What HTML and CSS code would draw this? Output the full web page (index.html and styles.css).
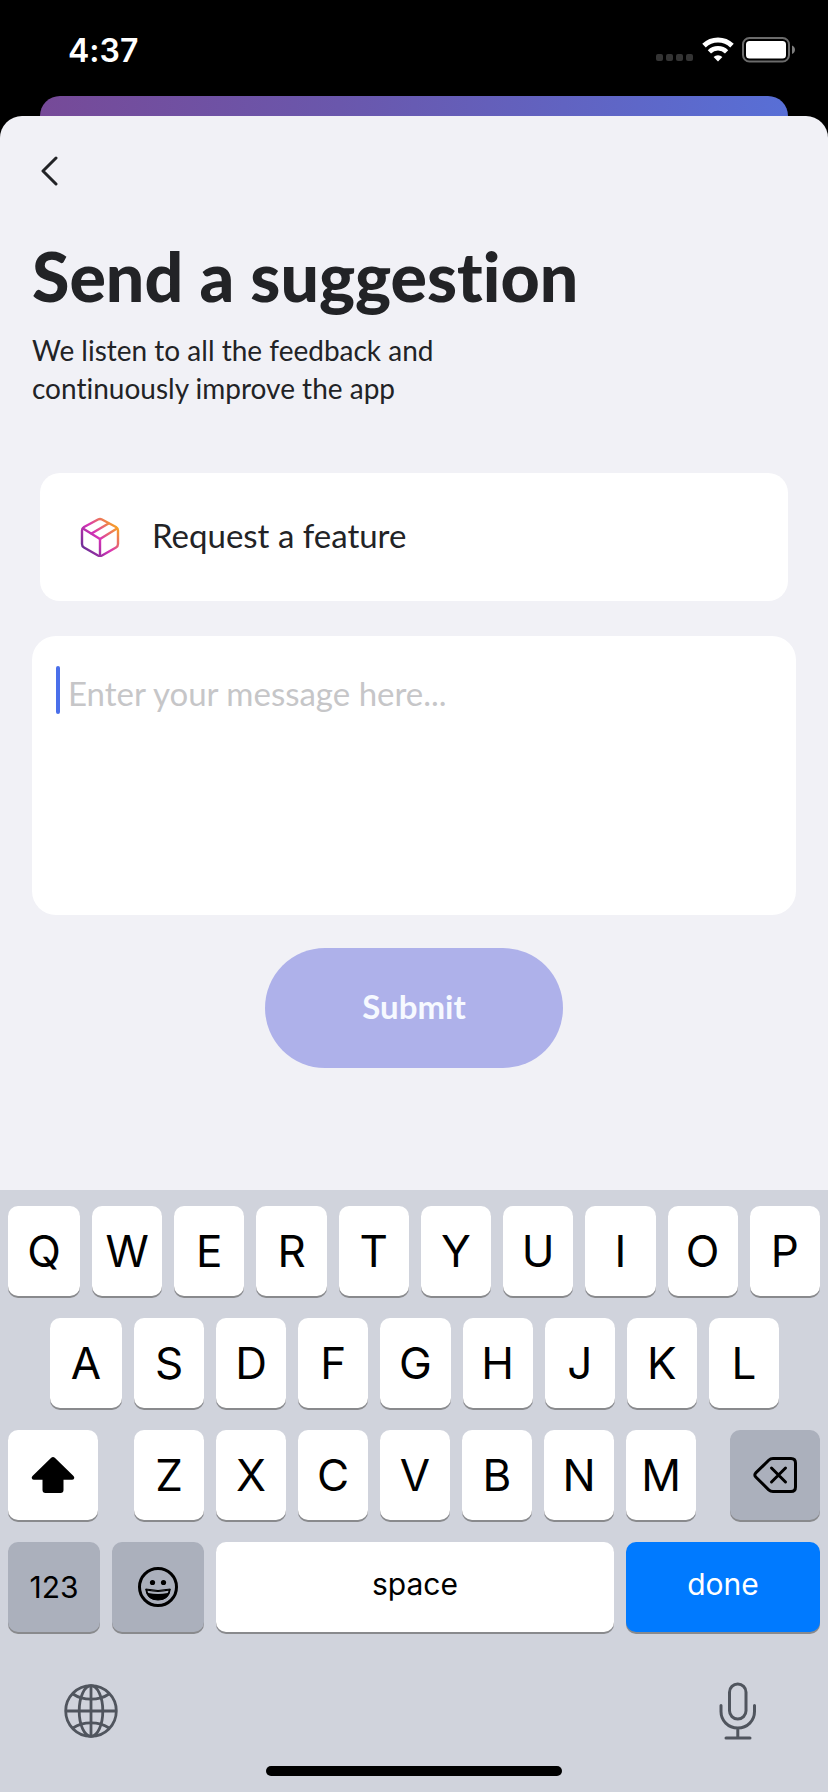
FILE: index.html
```html
<!DOCTYPE html>
<html lang="en">
<head>
  <meta charset="UTF-8" />
  <meta name="viewport" content="width=device-width, initial-scale=1" />
  <title>Send a suggestion</title>
  <link rel="stylesheet" href="styles.css">
</head>
<body>
  <header class="status-bar">
    <time class="clock">4:37</time>
    <div class="status-icons">
      <svg width="38" height="26" viewBox="0 0 38 26" fill="#343434">
        <rect x="0" y="17" width="7" height="7" rx="2" />
        <rect x="10" y="17" width="7" height="7" rx="2" />
        <rect x="20" y="17" width="7" height="7" rx="2" />
        <rect x="30" y="17" width="7" height="7" rx="2" />
      </svg>
      <svg width="32" height="26" viewBox="0 0 32 26" fill="none" stroke="#fff">
        <path d="M2 8.6a20 20 0 0 1 28 0" stroke-width="5" />
        <path d="M7.4 14.8a12.2 12.2 0 0 1 17.2 0" stroke-width="4.6" />
        <path d="M16 24.5l-4.4-4.5a6.4 6.4 0 0 1 8.8 0z" fill="#fff" stroke="none" />
      </svg>
      <svg width="53" height="26" viewBox="0 0 53 26">
        <rect x="1" y="1" width="46" height="23.5" rx="6.5" fill="none" stroke="#6b6b6b" stroke-width="2" />
        <rect x="4" y="4" width="40" height="17.5" rx="3.5" fill="#fff" />
        <path d="M50 8.5c4 1.5 4 7 0 8.500z" fill="#7d7d7d" />
      </svg>
    </div>
  </header>

  <div class="previous-page"></div>

  <main class="sheet">
    <button type="button" class="back" aria-label="Back">
      <svg width="18" height="30" viewBox="0 0 18 30" fill="none" stroke="#222326" stroke-width="3" stroke-linecap="round" stroke-linejoin="round">
        <path d="M16 2L3 15l13 13" />
      </svg>
    </button>

    <h1>Send a suggestion</h1>
    <p class="intro">We listen to all the feedback and continuously improve the app</p>

    <form class="suggestion" id="suggestion">
      <button type="button" class="topic">
        <svg width="40" height="40" viewBox="0 0 40 40" fill="none" stroke="url(#box)" stroke-width="2.400" stroke-linecap="round" stroke-linejoin="round">
          <defs>
            <linearGradient id="box" gradientUnits="userSpaceOnUse" x1="3" y1="36" x2="37" y2="8">
              <stop offset="0" stop-color="#5b2d91" />
              <stop offset="0.5" stop-color="#d832b6" />
              <stop offset="1" stop-color="#f9a61c" />
            </linearGradient>
          </defs>
          <path d="M18 2.500q2-1 4 0l14 7.500q2 1.200 2 3.500v13.500q0 2.300-2 3.500l-14 8q-2 1-4 0l-14-8q-2-1.200-2-3.500v-13.500q0-2.300 2-3.500z" />
          <path d="M3 11.500l17 10.500 17-10.500" />
          <path d="M20 22v16.500" />
          <path d="M11.500 16.500L28.500 6.500" />
        </svg>
        <span>Request a feature</span>
      </button>

      <div class="message">
        <textarea id="message" name="message" aria-label="Message" placeholder="Enter your message here..."></textarea>
        <span class="caret"></span>
      </div>

      <button type="submit" class="submit">Submit</button>
    </form>
  </main>

  <section class="keyboard" aria-label="Keyboard">
    <div class="keys keys-top">
      <button type="button">Q</button>
      <button type="button">W</button>
      <button type="button">E</button>
      <button type="button">R</button>
      <button type="button">T</button>
      <button type="button">Y</button>
      <button type="button">U</button>
      <button type="button">I</button>
      <button type="button">O</button>
      <button type="button">P</button>
    </div>
    <div class="keys keys-home">
      <button type="button">A</button>
      <button type="button">S</button>
      <button type="button">D</button>
      <button type="button">F</button>
      <button type="button">G</button>
      <button type="button">H</button>
      <button type="button">J</button>
      <button type="button">K</button>
      <button type="button">L</button>
    </div>
    <div class="keys keys-bottom">
      <button type="button" aria-label="Shift">
        <svg width="44" height="38" viewBox="0 0 44 38" fill="#000">
          <path d="M20.200 1.800q1.800-1.600 3.600 0L42.500 20q1.200 1.400.6 2.600-.5 1.200-2.100 1.200h-8.500V34q0 3-3 3h-15q-3 0-3-3V23.800H3q-1.600 0-2.100-1.200-.6-1.200.6-2.600z" />
        </svg>
      </button>
      <div class="letters">
        <button type="button">Z</button>
        <button type="button">X</button>
        <button type="button">C</button>
        <button type="button">V</button>
        <button type="button">B</button>
        <button type="button">N</button>
        <button type="button">M</button>
      </div>
      <button type="button" class="gray" aria-label="Delete">
        <svg width="44" height="38" viewBox="0 0 44 38" fill="none" stroke="#000" stroke-width="3" stroke-linecap="round" stroke-linejoin="round">
          <path d="M20 2.500h18q4.500 0 4.500 4.500v24q0 4.500-4.500 4.500H20q-2.500 0-4.300-1.700L3 21.300q-2.400-2.300 0-4.600L15.700 4.200Q17.500 2.500 20 2.500z" />
          <path d="M18.500 12l14 14M32.500 12l-14 14" />
        </svg>
      </button>
    </div>
    <div class="keys keys-space">
      <button type="button" class="gray word">123</button>
      <button type="button" class="gray" aria-label="Emoji">
        <svg width="42" height="42" viewBox="0 0 42 42">
          <circle cx="21" cy="21" r="18.500" fill="none" stroke="#000" stroke-width="3" />
          <circle cx="15.500" cy="16.500" r="2.600" />
          <circle cx="26.500" cy="16.500" r="2.600" />
          <path d="M8.700 23q12.300 3 24.600 0-1 11-12.300 11T8.700 23z" fill="#000" stroke="#000" stroke-linejoin="round" />
          <path d="M10.500 24.800q10.500 2.300 21 0-.2 1.200-.8 2.200-9.700 2.200-19.400 0-.6-1-.8-2.200z" fill="#abb0bc" />
        </svg>
      </button>
      <button type="button" class="word raised">space</button>
      <button type="button" class="blue word raised">done</button>
    </div>

    <div class="keyboard-footer">
      <button type="button" aria-label="Next keyboard">
        <svg width="54" height="54" viewBox="0 0 54 54" fill="none" stroke="#50555e" stroke-width="2.800">
          <circle cx="27" cy="27" r="25.300" />
          <ellipse cx="27" cy="27" rx="11.800" ry="25.300" />
          <path d="M27 1.500v51M1.500 27h51" />
          <path d="M9 10q7.500 5.200 18 5.200T45 10M9 44q7.500-5.200 18-5.200T45 44" />
        </svg>
      </button>
      <button type="button" aria-label="Dictate">
        <svg width="38" height="58" viewBox="0 0 38 58" fill="none" stroke="#50555e" stroke-width="3" stroke-linecap="round">
          <rect x="10.500" y="2" width="16.500" height="35" rx="8.250" />
          <path d="M2 23.500v6c0 9 7 16.500 16.800 16.500s16.700-7.500 16.700-16.500v-6M18.800 46v10M7 56h24" />
        </svg>
      </button>
    </div>
    <div class="home-indicator"></div>
  </section>

  <script>
    const form = document.getElementById('suggestion');

    form.addEventListener('submit', function (e) {
      e.preventDefault();
    });
  </script>
</body>
</html>
```
FILE: styles.css
```css
* {
  margin: 0;
  padding: 0;
  box-sizing: border-box;
}
body {
  min-height: 100vh;
  display: flex;
  flex-direction: column;
  background: #000;
  color: #222326;
  font-family: Lato, sans-serif;
  font-variant-ligatures: none;
}
button {
  border: none;
  background: none;
  color: inherit;
  font-family: inherit;
  cursor: pointer;
}
svg {
  display: block;
}

/* status bar */
.status-bar {
  height: 96px;
  display: flex;
  justify-content: space-between;
  align-items: center;
  padding: 4px 33px 0 68px;
  color: #fff;
}
.clock {
  font-family: Inter, sans-serif;
  font-size: 32px;
  font-weight: 600;
}
.status-icons {
  display: flex;
  gap: 8px;
}
.previous-page {
  height: 20px;
  margin: 0 40px;
  border-radius: 20px 20px 0 0;
  background: linear-gradient(90deg, #764a98, #6a57ac 40%, #586fd6);
}

/* sheet */
.sheet {
  flex: 1;
  padding: 40px 32px;
  border-radius: 22px 22px 0 0;
  background: #f1f1f6;
}
.back {
  display: block;
  padding: 0 8px;
}
h1 {
  margin-top: 50px;
  font-size: 68px;
  font-weight: 900;
  line-height: 80px;
}
.intro {
  max-width: 480px;
  margin-top: 15px;
  font-size: 28px;
  line-height: 38px;
}
.suggestion {
  display: flex;
  flex-direction: column;
  margin-top: 66px;
}
.topic {
  display: flex;
  align-items: center;
  gap: 32px;
  height: 128px;
  margin: 0 8px;
  padding: 0 40px;
  border-radius: 20px;
  background: #fff;
  font-size: 33px;
}
.topic span {
  padding-bottom: 4px;
}
.message {
  position: relative;
  margin-top: 35px;
}
.message textarea {
  display: block;
  width: 100%;
  height: 279px;
  padding: 38px 36px;
  border: none;
  border-radius: 24px;
  outline: none;
  resize: none;
  background: #fff;
  color: inherit;
  font-family: inherit;
  font-size: 33px;
  line-height: 38px;
}
.message textarea::placeholder {
  color: #c6c6c8;
}
.caret {
  position: absolute;
  top: 30px;
  left: 24px;
  width: 4px;
  height: 48px;
  border-radius: 2px;
  background: #4a6fea;
}
.submit {
  align-self: center;
  width: 298px;
  height: 120px;
  margin-top: 33px;
  padding-bottom: 4px;
  border-radius: 60px;
  background: #aeb1ea;
  color: #f6f9ff;
  font-size: 33px;
  font-weight: 700;
}

/* keyboard */
.keyboard {
  display: flex;
  flex-direction: column;
  gap: 22px;
  padding: 16px 8px;
  background: #d0d3dc;
  color: #000;
  font-family: Inter, sans-serif;
}
.keys,
.letters {
  display: grid;
  gap: 12px;
}
.keys-top {
  grid-template-columns: 72px repeat(9, 1fr);
}
.keys-home {
  grid-template-columns: 72px repeat(8, 1fr);
  padding: 0 41px 0 42px;
}
.keys-bottom {
  grid-template-columns: 90px 1fr 90px;
}
.letters {
  grid-template-columns: repeat(7, 1fr);
  padding: 0 22px 0 24px;
}
.keys-space {
  grid-template-columns: 92px 92px 1fr 194px;
}
.keys button {
  display: flex;
  justify-content: center;
  align-items: center;
  height: 90px;
  border-radius: 10px;
  background: #fff;
  box-shadow: 0 2px 0 #898a8d;
  font-size: 44px;
}
.keys .gray {
  background: #abb0bc;
}
.keys .blue {
  background: #007aff;
  color: #fff;
}
.keys .word {
  font-size: 30px;
}
.keys .raised {
  padding-bottom: 6px;
}
.keyboard-footer {
  display: flex;
  justify-content: space-between;
  align-items: center;
  height: 66px;
  margin-top: 24px;
  padding: 0 63px 0 56px;
}
.home-indicator {
  align-self: center;
  width: 296px;
  height: 10px;
  border-radius: 5px;
  background: #000;
}
```
